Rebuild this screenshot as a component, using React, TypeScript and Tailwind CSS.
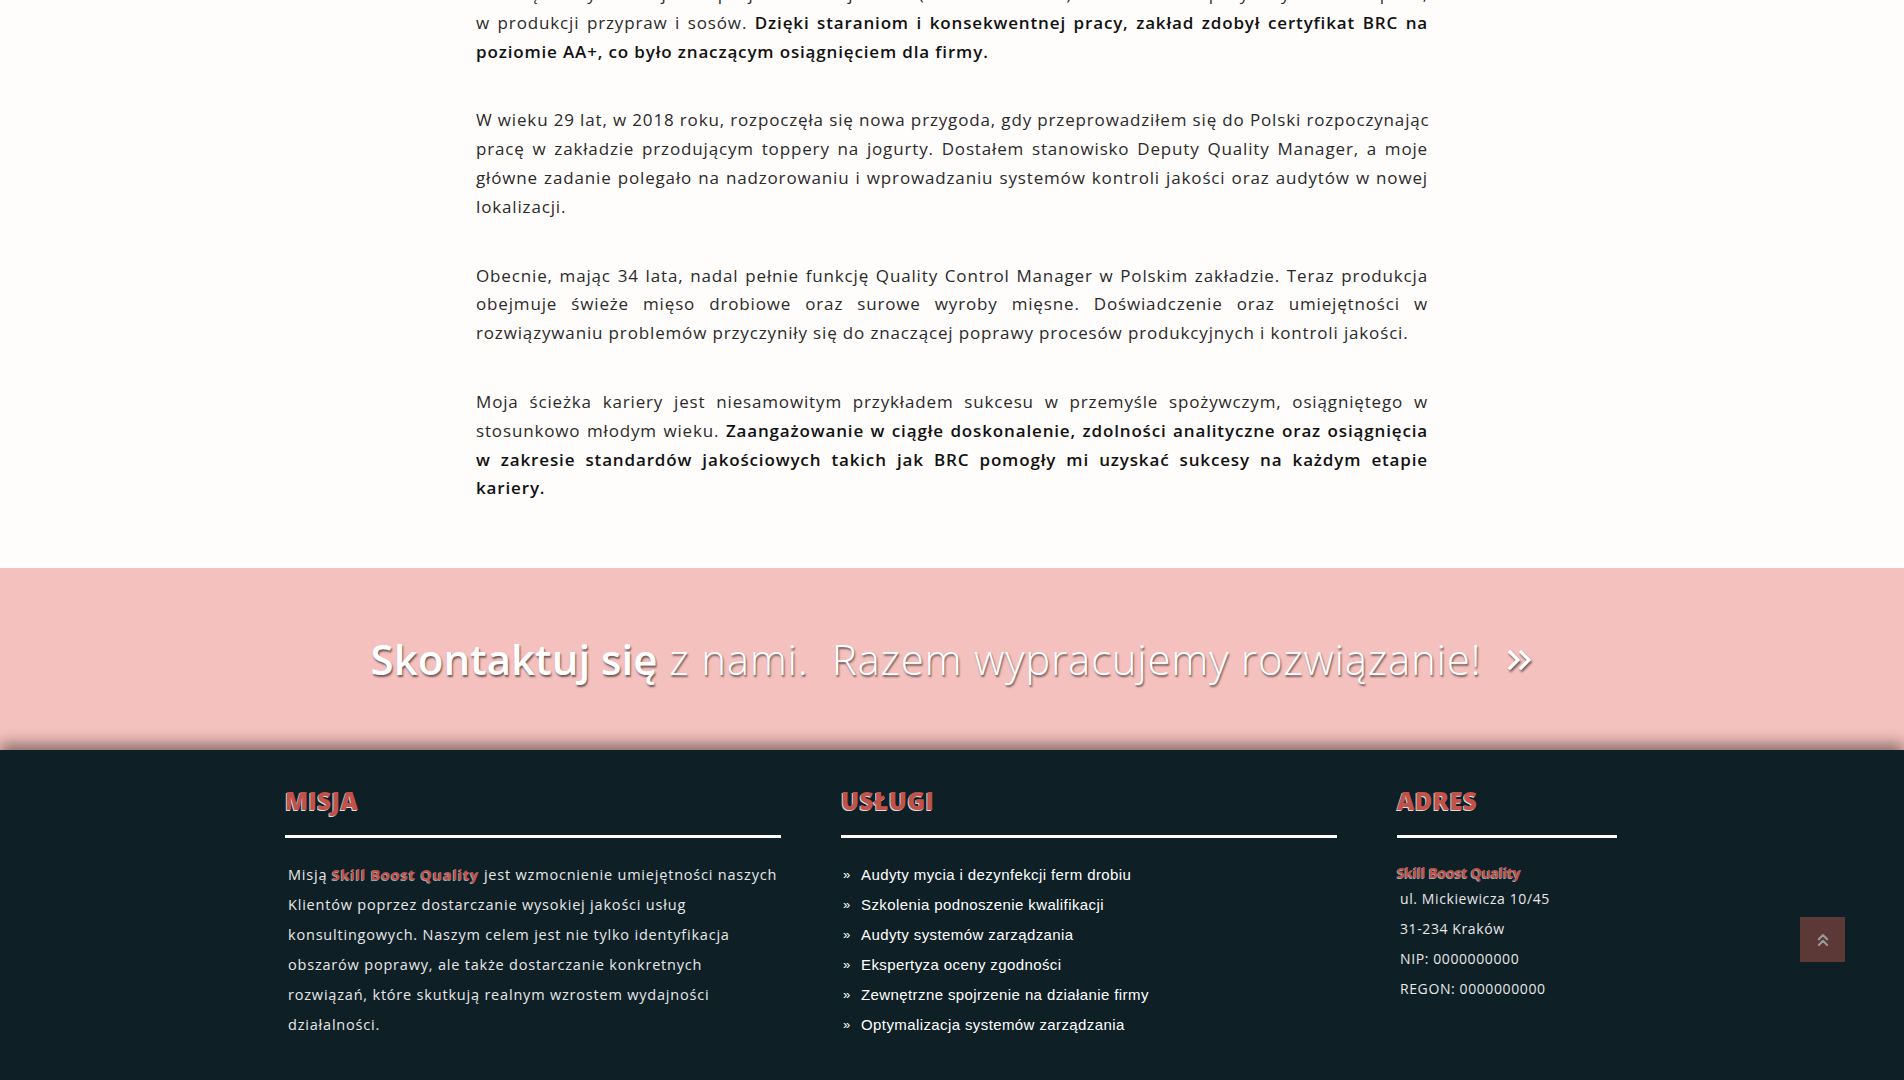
import { ReactNode } from "react";
import { ChevronsUp } from "lucide-react";

const B = ({ children }: { children: ReactNode }) => (
  <span className="font-semibold text-[#111]">{children}</span>
);

const paragraphs: ReactNode[][] = [
  [
    "Karierę zaczynałem jako specjalista ds. jakości (w wieku 23 lat) w zakładzie spożywczym w Hiszpanii,",
    <>
      w produkcji przypraw i sosów.{" "}
      <B>Dzięki staraniom i konsekwentnej pracy, zakład zdobył certyfikat BRC na</B>
    </>,
    <B>poziomie AA+, co było znaczącym osiągnięciem dla firmy.</B>,
  ],
  [
    "W wieku 29 lat, w 2018 roku, rozpoczęła się nowa przygoda, gdy przeprowadziłem się do Polski rozpoczynając",
    "pracę w zakładzie przodującym toppery na jogurty. Dostałem stanowisko Deputy Quality Manager, a moje",
    "główne zadanie polegało na nadzorowaniu i wprowadzaniu systemów kontroli jakości oraz audytów w nowej",
    "lokalizacji.",
  ],
  [
    "Obecnie, mając 34 lata, nadal pełnie funkcję Quality Control Manager w Polskim zakładzie. Teraz produkcja",
    "obejmuje świeże mięso drobiowe oraz surowe wyroby mięsne. Doświadczenie oraz umiejętności w",
    "rozwiązywaniu problemów przyczyniły się do znaczącej poprawy procesów produkcyjnych i kontroli jakości.",
  ],
  [
    "Moja ścieżka kariery jest niesamowitym przykładem sukcesu w przemyśle spożywczym, osiągniętego w",
    <>
      stosunkowo młodym wieku.{" "}
      <B>Zaangażowanie w ciągłe doskonalenie, zdolności analityczne oraz osiągnięcia</B>
    </>,
    <B>w zakresie standardów jakościowych takich jak BRC pomogły mi uzyskać sukcesy na każdym etapie</B>,
    <B>kariery.</B>,
  ],
];

const services = [
  "Audyty mycia i dezynfekcji ferm drobiu",
  "Szkolenia podnoszenie kwalifikacji",
  "Audyty systemów zarządzania",
  "Ekspertyza oceny zgodności",
  "Zewnętrzne spojrzenie na działanie firmy",
  "Optymalizacja systemów zarządzania",
];

const FooterHeading = ({ children }: { children: ReactNode }) => (
  <div>
    <h3 className="h-[48px] text-[24px] leading-[48px] font-extrabold tracking-[0.4px] text-[#c0524b] [text-shadow:-1px_1px_0_rgba(255,255,255,0.85)]">
      {children}
    </h3>
    <div className="mt-[10px] h-[3px] bg-white" />
  </div>
);

export default function App() {
  return (
    <div className="min-h-screen bg-[#0e1f26] font-['Open_Sans',sans-serif]">
      {/* tekst */}
      <section className="bg-[#fffcfc] pb-[65px]">
        <div className="mx-auto -mt-[20px] w-[952px] text-[17px] leading-[28.8px] tracking-[0.85px] text-[#2a2a2a]">
          {paragraphs.map((lines, i) => (
            <p key={i} className="mb-10 last:mb-0 text-justify">
              {lines.map((line, j) => (
                <span
                  key={j}
                  className={
                    j < lines.length - 1
                      ? "block whitespace-nowrap [text-align-last:justify]"
                      : "block"
                  }
                >
                  {line}
                </span>
              ))}
            </p>
          ))}
        </div>
      </section>

      {/* kontakt */}
      <section className="flex h-[182px] items-center justify-center bg-[#f4c1be]">
        <a
          href="#"
          className="flex items-center text-[42px] leading-none text-white [text-shadow:1px_2px_2px_rgba(0,0,0,0.55)]"
        >
          <span className="font-semibold tracking-[0px]">Skontaktuj się</span>
          <span className="ml-[12px] font-light tracking-[0.75px]">
            z nami.&nbsp; Razem wypracujemy rozwiązanie!
          </span>
          <svg
            className="ml-[26px] mt-[2px] h-[24px] w-[26px] [filter:drop-shadow(1px_2px_1px_rgba(0,0,0,0.55))]"
            viewBox="0 0 26 24"
            fill="none"
            stroke="white"
            strokeWidth="3.2"
            strokeLinecap="square"
          >
            <path d="M3 4l8 8-8 8" />
            <path d="M14 4l8 8-8 8" />
          </svg>
        </a>
      </section>

      {/* stopka */}
      <footer className="relative z-10 bg-[#0e1f26] pb-[40px] pt-[27px] shadow-[0_-6px_14px_rgba(0,0,0,0.45)]">
        <div className="ml-[285px] grid grid-cols-[496px_496px_220px] gap-x-[60px]">
          <div>
            <FooterHeading>MISJA</FooterHeading>
            <div className="mt-[22px] pl-[3px] text-[14.5px] leading-[30px] font-normal tracking-[0.8px] text-[#e8e8e8]">
              <div>
                Misją{" "}
                <span className="font-bold text-[#c0524b] [text-shadow:-1px_1px_0_rgba(255,255,255,0.6)]">
                  Skill Boost Quality
                </span>{" "}
                jest wzmocnienie umiejętności naszych
              </div>
              <div>Klientów poprzez dostarczanie wysokiej jakości usług</div>
              <div>konsultingowych. Naszym celem jest nie tylko identyfikacja</div>
              <div>obszarów poprawy, ale także dostarczanie konkretnych</div>
              <div>rozwiązań, które skutkują realnym wzrostem wydajności</div>
              <div>działalności.</div>
            </div>
          </div>

          <div>
            <FooterHeading>USŁUGI</FooterHeading>
            <ul className="mt-[22px] font-['Liberation_Sans',Arial,sans-serif] text-[15px] leading-[30px] tracking-[0.4px] text-white">
              {services.map((s) => (
                <li key={s} className="flex">
                  <span className="w-[20px] pl-[2px] text-[13px]">»</span>
                  <span>{s}</span>
                </li>
              ))}
            </ul>
          </div>

          <div>
            <FooterHeading>ADRES</FooterHeading>
            <div className="mt-[22px] text-[14px] leading-[30px] font-normal tracking-[0.6px] text-[#e8e8e8]">
              <div className="h-[24px] leading-[26px] font-bold tracking-[-0.2px] text-[#c0524b] [text-shadow:-1px_1px_0_rgba(255,255,255,0.6)]">
                Skill Boost Quality
              </div>
              <div className="pl-[3px]">ul. Mickiewicza 10/45</div>
              <div className="pl-[3px]">31-234 Kraków</div>
              <div className="pl-[3px]">NIP: 0000000000</div>
              <div className="pl-[3px]">REGON: 0000000000</div>
            </div>
          </div>
        </div>

        <a
          href="#"
          className="absolute left-[1800px] top-[167px] flex h-[45px] w-[45px] items-center justify-center bg-[#5c3836]"
        >
          <ChevronsUp size={20} strokeWidth={2.5} className="text-[#9a9a9a]" />
        </a>
      </footer>
    </div>
  );
}
